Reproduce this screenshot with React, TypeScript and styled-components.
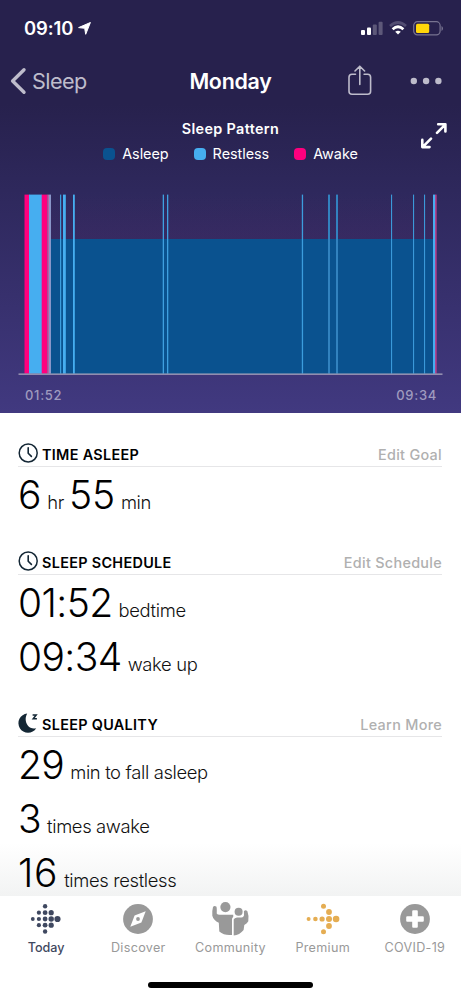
import React from "react";
import styled, { createGlobalStyle } from "styled-components";

const GlobalStyle = createGlobalStyle`
  html, body { margin: 0; padding: 0; background: #fff; }
  * { box-sizing: border-box; }
  body { overflow: hidden; }
`;

const Screen = styled.div`
  width: 461px;
  height: 998px;
  display: flex;
  flex-direction: column;
  overflow: hidden;
  background: #fff;
  font-family: Inter, "Liberation Sans", sans-serif;
  color: #000;
`;

const Hero = styled.header`
  flex: none;
  height: 413px;
  display: flex;
  flex-direction: column;
  background: linear-gradient(#27214d 0, #27214d 104px, #2e285c 190px, #413980 413px);
  color: #fff;
`;

const StatusBar = styled.div`
  height: 56px;
  padding: 0 17px 0 24px;
  display: flex;
  align-items: center;
  justify-content: space-between;
`;

const Clock = styled.div`
  display: flex;
  align-items: center;
  gap: 5px;
  font-size: 18.4px;
  font-weight: 600;
  letter-spacing: -0.05px;
`;

const StatusIcons = styled.div`
  display: flex;
  align-items: center;
  gap: 6px;
`;

const NavBar = styled.nav`
  height: 50px;
  padding: 0 19px 0 10px;
  display: grid;
  grid-template-columns: 1fr auto 1fr;
  align-items: center;
`;

const Back = styled.div`
  display: flex;
  align-items: center;
  gap: 5px;
  font-size: 21.6px;
  letter-spacing: -0.55px;
  color: #bebccb;
`;

const PageTitle = styled.h1`
  margin: 0 0 0 9px;
  font-size: 21.4px;
  font-weight: 600;
  line-height: 30px;
  letter-spacing: -0.25px;
`;

const Actions = styled.div`
  display: flex;
  align-items: center;
  justify-content: flex-end;
  gap: 38px;
`;

const PatternHeader = styled.div`
  height: 88px;
  padding: 14px 14px 0;
  display: grid;
  grid-template-columns: 32px 1fr 32px;
`;

const PatternInfo = styled.div`
  display: flex;
  flex-direction: column;
  align-items: center;
`;

const PatternTitle = styled.div`
  font-size: 14.4px;
  font-weight: 600;
  line-height: 18px;
  letter-spacing: 0.35px;
`;

const Legend = styled.div`
  margin-top: 7px;
  display: flex;
  gap: 25px;
`;

const LegendItem = styled.div`
  display: flex;
  align-items: center;
  gap: 7px;
  font-size: 14.4px;
  line-height: 18px;
  letter-spacing: -0.03px;
`;

const Swatch = styled.span<{ $color: string }>`
  width: 12px;
  height: 12px;
  border-radius: 4px;
  background: ${(p) => p.$color};
`;

const ExpandButton = styled.div`
  padding: 3px 0 0 6px;
`;

const ChartFrame = styled.div`
  height: 181px;
  padding-left: 18px;
`;

const AxisLabels = styled.div`
  padding: 11px 24px 0 25px;
  display: flex;
  justify-content: space-between;
  font-size: 13px;
  line-height: 18px;
  font-weight: 500;
  letter-spacing: 0.7px;
  color: #9f9bbf;
`;

const Content = styled.main`
  flex: none;
  height: 483px;
  overflow: hidden;
  background: linear-gradient(#fff 0, #fff 430px, #f2f3f3 483px);
`;

const Section = styled.section`
  padding: 26px 19px 0 18px;
`;

const SectionHead = styled.div`
  height: 28px;
  border-bottom: 1px solid #e6e6e8;
  display: flex;
  align-items: center;
`;

const SectionTitle = styled.h2`
  margin: 4px 0 0 4px;
  flex: 1;
  font-size: 14.4px;
  font-weight: 600;
  line-height: 18px;
  letter-spacing: 0.32px;
`;

const SectionLink = styled.a`
  margin-top: 4px;
  font-size: 14.4px;
  font-weight: 500;
  line-height: 18px;
  letter-spacing: 0.3px;
  color: #b0b0b0;
`;

const ValueRow = styled.div`
  height: 54px;
  padding-top: 4px;
  display: flex;
  align-items: baseline;
  white-space: nowrap;
`;

const Figure = styled.span<{ $tracking?: number }>`
  font-size: 39px;
  font-weight: 300;
  line-height: 48px;
  letter-spacing: ${(p) => p.$tracking ?? -0.6}px;
`;

const Unit = styled.span`
  margin: 0 5px 0 6px;
  font-size: 18.4px;
  font-weight: 300;
  letter-spacing: -0.35px;
  color: #111;
`;

const TabBar = styled.footer`
  flex: none;
  height: 102px;
  background: #fff;
  display: flex;
  flex-direction: column;
  align-items: center;
`;

const Tabs = styled.div`
  width: 100%;
  height: 86px;
  display: grid;
  grid-template-columns: repeat(5, 1fr);
`;

const Tab = styled.div<{ $color: string; $active?: boolean }>`
  padding-top: 5px;
  display: flex;
  flex-direction: column;
  align-items: center;
  gap: 2px;
  font-size: 12.6px;
  line-height: 18px;
  font-weight: ${(p) => (p.$active ? 500 : 400)};
  letter-spacing: ${(p) => (p.$active ? 0 : 0.3)}px;
  color: ${(p) => p.$color};
`;

const HomeIndicator = styled.div`
  width: 165px;
  height: 6px;
  border-radius: 3px;
  background: #000;
`;

const LocationIcon = () => (
  <svg width="13" height="13" viewBox="0 0 13 13">
    <path d="M12.4.5 7.7 12.3 6.7 6.3.6 5.6Z" fill="#fff" stroke="#fff" strokeWidth="1" strokeLinejoin="round" />
  </svg>
);

const SignalIcon = () => (
  <svg width="22" height="14" viewBox="0 0 22 14" fill="#fff">
    <rect x="0" y="9" width="4" height="5" rx="1" />
    <rect x="6" y="6.5" width="4" height="7.5" rx="1" />
    <rect x="11.8" y="3.4" width="4" height="10.6" rx="1" opacity=".25" />
    <rect x="17.6" y=".8" width="4" height="13.2" rx="1" opacity=".25" />
  </svg>
);

const WifiIcon = () => (
  <svg width="18" height="14" viewBox="0 0 18 14">
    <path d="M1 5Q9-2 17 5" fill="none" stroke="#524d72" strokeWidth="2.8" />
    <path d="M3.6 8.2Q9 3.4 14.4 8.2" fill="none" stroke="#fff" strokeWidth="2.8" />
    <path d="M6.2 10.8Q9 8.6 11.8 10.8L9 13.6Z" fill="#fff" />
  </svg>
);

const BatteryIcon = () => (
  <svg width="31" height="15" viewBox="0 0 31 15">
    <rect x=".7" y=".7" width="26.4" height="13.2" rx="3.8" fill="none" stroke="#777390" strokeWidth="1.2" />
    <rect x="3" y="2.8" width="13.2" height="9.2" rx="1.5" fill="#ffd60a" />
    <path d="M28.5 5v5q1.5-.8 1.5-2.5t-1.5-2.5" fill="#777390" />
  </svg>
);

const BackIcon = () => (
  <svg width="17" height="28" viewBox="0 0 17 28">
    <path d="M14 2.8 2.6 14 14 25.2" fill="none" stroke="#bebccb" strokeWidth="3.4" strokeLinecap="round" strokeLinejoin="round" />
  </svg>
);

const ShareIcon = () => (
  <svg width="24" height="32" viewBox="0 0 24 32" fill="none" stroke="#bebccb" strokeWidth="1.6" strokeLinecap="round" strokeLinejoin="round">
    <path d="M7.5 9.2H4Q1 9.2 1 12.2V26.2Q1 29.2 4 29.2H19.6Q22.6 29.2 22.6 26.2V12.2Q22.6 9.2 19.6 9.2H16.1M11.8 19.4V1.2M7 6 11.8 1.2 16.6 6" />
  </svg>
);

const MoreIcon = () => (
  <svg width="32" height="8" viewBox="0 0 32 8" fill="#bebccb">
    <circle cx="3.8" cy="4" r="3.2" />
    <circle cx="16.1" cy="4" r="3.2" />
    <circle cx="28.4" cy="4" r="3.2" />
  </svg>
);

const ExpandIcon = () => (
  <svg width="26" height="26" viewBox="0 0 26 26" fill="none" stroke="#fff" strokeWidth="2.6" strokeLinecap="round" strokeLinejoin="round">
    <path d="M16 9.8 24 1.8M17.2 1.3H24.4V8.5M10 15.6 1.8 23.8M1.3 16.9V24.1H8.5" />
  </svg>
);

const RESTLESS = "#46aef0";
const AWAKE = "#ff007e";
const ASLEEP = "#0a528f";

const bars = [
  { x: 6.5, w: 5, color: AWAKE },
  { x: 11, w: 13, color: RESTLESS },
  { x: 23.7, w: 5.6, color: AWAKE },
  { x: 29.3, w: 1.7, color: "#c05ca5" },
  { x: 31, w: 2, color: "#8996c8" },
  { x: 42, w: 1.2, color: "#3a9ddd" },
  { x: 45, w: 2.8, color: RESTLESS },
  { x: 55, w: 1.8, color: RESTLESS },
  { x: 144.7, w: 1.3, color: "#3fa0e0" },
  { x: 149, w: 1.3, color: "#3fa0e0" },
  { x: 283.8, w: 1.3, color: "#3c9ddd" },
  { x: 310, w: 2, color: "#3282bf" },
  { x: 318, w: 2, color: "#3282bf" },
  { x: 373, w: 1.1, color: "#3b99d9" },
  { x: 395, w: 1.1, color: "#3b99d9" },
  { x: 406, w: 1.1, color: "#3b99d9" },
  { x: 415, w: 2.3, color: RESTLESS },
  { x: 417.2, w: 1.4, color: "#c4428e" },
];

const SleepChart = () => (
  <svg width="425" height="181" viewBox="0 0 425 181" display="block">
    <defs>
      <linearGradient id="warm" x1="0" y1="0" x2="0" y2="1">
        <stop offset="0" stopColor="#5a1f55" stopOpacity="0" />
        <stop offset="1" stopColor="#5a1f55" stopOpacity=".13" />
      </linearGradient>
    </defs>
    <rect x="33" y="0" width="385" height="45" fill="url(#warm)" />
    <rect x="33" y="45" width="384" height="135" fill={ASLEEP} />
    {bars.map((b) => (
      <rect key={b.x} x={b.x} y=".6" width={b.w} height="179" fill={b.color} />
    ))}
    <rect x=".5" y="179.5" width="424" height="1.3" fill="#a7a3bb" />
  </svg>
);

const ClockIcon = () => (
  <svg width="20" height="20" viewBox="0 0 20 20" fill="none" stroke="#142735" strokeLinecap="round" strokeLinejoin="round">
    <circle cx="10.2" cy="10" r="9" strokeWidth="1.5" />
    <path d="M10.2 4.8V10.2L13.4 13.4" strokeWidth="1.6" />
  </svg>
);

const MoonIcon = () => (
  <svg width="20" height="20" viewBox="0 0 20 20">
    <path d="M9.2 .6A9.6 9.6 0 1 0 18.2 15.2C10.5 17.5 4.8 8.5 9.2 .6Z" fill="#142735" />
    <path d="M14.6 2H18.2L15.2 5.8H18.9" fill="none" stroke="#142735" strokeWidth="1.5" />
  </svg>
);

type Dot = [number, number, number];

const DotIcon = ({ dots, fill }: { dots: Dot[]; fill: string }) => (
  <svg width="36" height="36" viewBox="0 0 36 36" fill={fill}>
    {dots.map(([x, y, r]) => (
      <circle key={`${x}-${y}`} cx={x} cy={y} r={r} />
    ))}
  </svg>
);

const todayDots: Dot[] = [
  [4.8, 18, 1.9], [10.9, 11.7, 2.1], [10.9, 18, 2.1], [10.9, 24.2, 2.1],
  [17.1, 5.3, 2.2], [17.1, 11.7, 2.4], [17.1, 18, 2.4], [17.1, 24.2, 2.4], [17.1, 30.5, 2.2],
  [23.2, 11.7, 2.6], [23.2, 18, 2.7], [23.2, 24.2, 2.6], [29.5, 18, 3.1],
];

const premiumDots: Dot[] = [
  [3.6, 18, 2], [10.4, 18, 2.3], [17.1, 18, 2.6], [24, 18, 3], [31.1, 18, 3.3],
  [18.5, 5.3, 2.5], [24, 11, 2.9], [24, 25, 2.9], [18.5, 30.7, 2.5],
];

const CompassIcon = () => (
  <svg width="36" height="36" viewBox="0 0 36 36">
    <circle cx="18" cy="18" r="14.9" fill="#999" />
    <path d="M25.7 10.3 21.4 21.4 10.3 25.7 14.6 14.6Z" fill="#fff" />
    <circle cx="18" cy="18" r="1.9" fill="#999" />
  </svg>
);

const PeopleIcon = () => (
  <svg width="40" height="36" viewBox="0 0 40 36" fill="#999">
    <circle cx="15.4" cy="6.1" r="5.1" />
    <circle cx="28.6" cy="10.8" r="4" />
    <path d="M3 6Q4.2 4.4 6.3 5.6Q7 6.2 6.7 12.4Q7.4 13.7 9.8 13.7H19.2Q21.3 13.6 23.2 13.8Q24 15.2 22 17.8V33.9Q14.5 34.9 9.3 30.5L8.8 21.8Q3.5 19.4 2.3 14.8Q2 9.4 3 6Z" />
    <path d="M23.7 18.6Q24.4 16.8 27 16.5H31.4Q34.2 16 34 13.4L33.9 10.2Q35.6 8.4 37.4 10.3Q39.2 15.3 38.3 20.2Q37.3 22.1 34.3 24.1L33.6 29Q29.5 34 23.7 34.5Z" />
  </svg>
);

const CrossIcon = () => (
  <svg width="36" height="36" viewBox="0 0 36 36">
    <circle cx="18" cy="18" r="14.9" fill="#999" />
    <path d="M16.2 9.2h3.6q1 0 1 1v5h5q1 0 1 1v3.6q0 1-1 1h-5v5q0 1-1 1h-3.6q-1 0-1-1v-5h-5q-1 0-1-1v-3.6q0-1 1-1h5v-5q0-1 1-1Z" fill="#fff" />
  </svg>
);

export default function App() {
  return (
    <Screen>
      <GlobalStyle />
      <Hero>
        <StatusBar>
          <Clock>09:10<LocationIcon /></Clock>
          <StatusIcons>
            <SignalIcon />
            <WifiIcon />
            <BatteryIcon />
          </StatusIcons>
        </StatusBar>
        <NavBar>
          <Back><BackIcon />Sleep</Back>
          <PageTitle>Monday</PageTitle>
          <Actions><ShareIcon /><MoreIcon /></Actions>
        </NavBar>
        <PatternHeader>
          <span />
          <PatternInfo>
            <PatternTitle>Sleep Pattern</PatternTitle>
            <Legend>
              <LegendItem><Swatch $color={ASLEEP} />Asleep</LegendItem>
              <LegendItem><Swatch $color={RESTLESS} />Restless</LegendItem>
              <LegendItem><Swatch $color={AWAKE} />Awake</LegendItem>
            </Legend>
          </PatternInfo>
          <ExpandButton><ExpandIcon /></ExpandButton>
        </PatternHeader>
        <ChartFrame><SleepChart /></ChartFrame>
        <AxisLabels><span>01:52</span><span>09:34</span></AxisLabels>
      </Hero>
      <Content>
        <Section>
          <SectionHead><ClockIcon /><SectionTitle>TIME ASLEEP</SectionTitle><SectionLink>Edit Goal</SectionLink></SectionHead>
          <ValueRow><Figure $tracking={-0.2}>6</Figure><Unit>hr</Unit><Figure $tracking={-0.2}>55</Figure><Unit>min</Unit></ValueRow>
        </Section>
        <Section>
          <SectionHead><ClockIcon /><SectionTitle>SLEEP SCHEDULE</SectionTitle><SectionLink>Edit Schedule</SectionLink></SectionHead>
          <ValueRow><Figure>01:52</Figure><Unit>bedtime</Unit></ValueRow>
          <ValueRow><Figure>09:34</Figure><Unit>wake up</Unit></ValueRow>
        </Section>
        <Section>
          <SectionHead><MoonIcon /><SectionTitle>SLEEP QUALITY</SectionTitle><SectionLink>Learn More</SectionLink></SectionHead>
          <ValueRow><Figure>29</Figure><Unit>min to fall asleep</Unit></ValueRow>
          <ValueRow><Figure>3</Figure><Unit>times awake</Unit></ValueRow>
          <ValueRow><Figure $tracking={0.7}>16</Figure><Unit>times restless</Unit></ValueRow>
        </Section>
      </Content>
      <TabBar>
        <Tabs>
          <Tab $color="#3f4860" $active><DotIcon dots={todayDots} fill="#3f4860" />Today</Tab>
          <Tab $color="#999"><CompassIcon />Discover</Tab>
          <Tab $color="#999"><PeopleIcon />Community</Tab>
          <Tab $color="#999"><DotIcon dots={premiumDots} fill="#e5ad52" />Premium</Tab>
          <Tab $color="#999"><CrossIcon />COVID-19</Tab>
        </Tabs>
        <HomeIndicator />
      </TabBar>
    </Screen>
  );
}
